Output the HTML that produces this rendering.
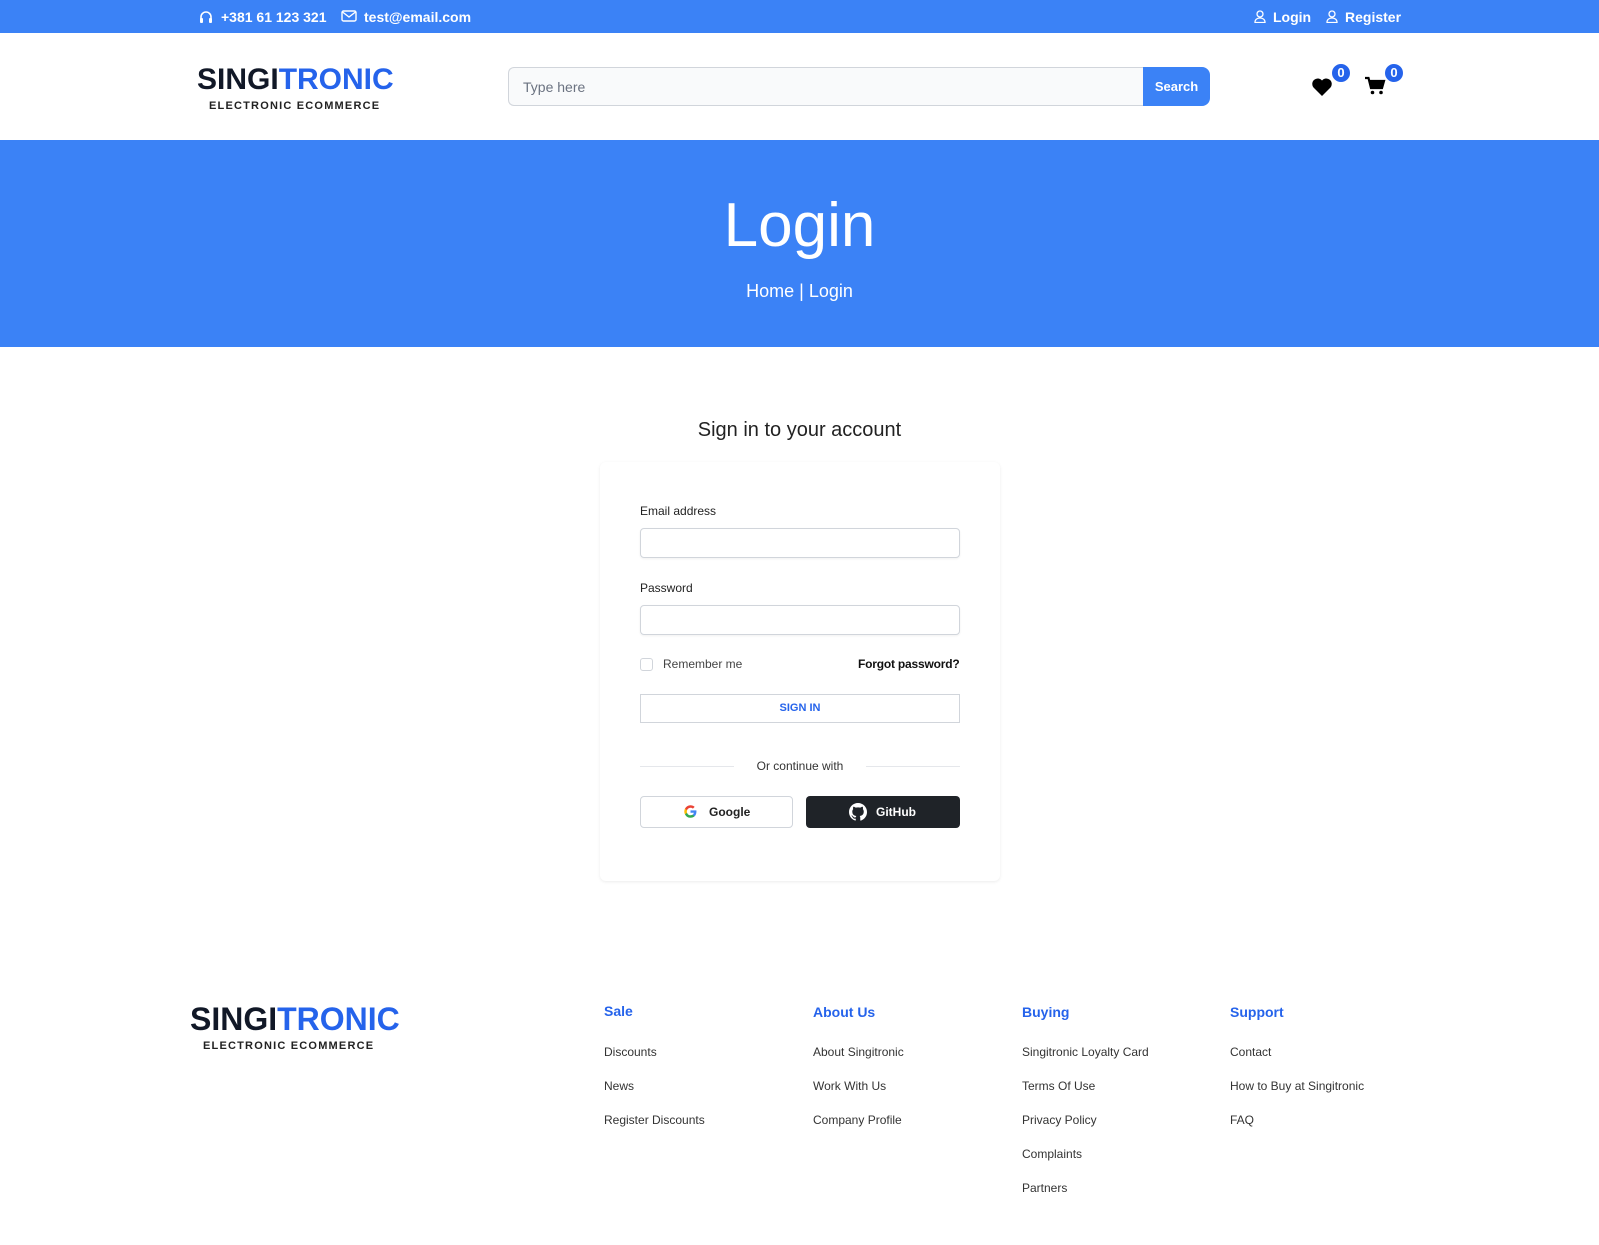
<!DOCTYPE html>
<html><head><meta charset="utf-8"><style>
*{box-sizing:border-box;margin:0;padding:0}
body{width:1599px;height:1245px;background:#fff;font-family:"Liberation Sans",Arial,sans-serif;color:#111827;position:relative;overflow:hidden}
.abs{position:absolute}
.top{left:0;top:0;width:1599px;height:33px;background:#3b82f6;color:#fff;font-weight:bold;font-size:14px}
.top span{position:absolute;top:9px}
.logo1{font-weight:900;font-size:30px;letter-spacing:0px;line-height:1}
.logo2{font-size:11px;letter-spacing:1.2px;font-weight:bold;color:#222}
.hero{left:0;top:140px;width:1599px;height:207px;background:#3b82f6;color:#fff;text-align:center}
input{font-family:inherit}
.field{position:absolute;left:640px;width:320px;height:30px;border:1px solid #d1d5db;border-radius:4px;box-shadow:0 1px 2px rgba(0,0,0,.06)}
.lbl{position:absolute;left:640px;font-size:12px;color:#222}
.fh{position:absolute;font-size:14px;font-weight:bold;color:#2563eb}
.fi{position:absolute;font-size:12px;color:#333}
</style></head><body>
<div class="abs top">
<svg class="abs" style="left:199px;top:10px" width="14" height="13" viewBox="0 0 14 13"><path d="M2 12V7a5 5 0 0 1 10 0v5" fill="none" stroke="#fff" stroke-width="1.6"/><rect x="1" y="8" width="3" height="5" rx="1" fill="#fff"/><rect x="10" y="8" width="3" height="5" rx="1" fill="#fff"/></svg>
<span style="left:221px">+381 61 123 321</span>
<svg class="abs" style="left:341px;top:10px" width="16" height="12" viewBox="0 0 16 12"><rect x="1" y="1" width="14" height="10" rx="1.5" fill="none" stroke="#fff" stroke-width="1.4"/><path d="M1.5 2l6.5 5 6.5-5" fill="none" stroke="#fff" stroke-width="1.4"/></svg>
<span style="left:364px">test@email.com</span>
<svg class="abs" style="left:1254px;top:10px" width="12" height="13" viewBox="0 0 12 13"><circle cx="6" cy="4" r="3" fill="none" stroke="#fff" stroke-width="1.3"/><path d="M1 12.5c0-3 2.2-4.5 5-4.5s5 1.5 5 4.5z" fill="none" stroke="#fff" stroke-width="1.3"/></svg>
<span style="left:1273px">Login</span>
<svg class="abs" style="left:1326px;top:10px" width="12" height="13" viewBox="0 0 12 13"><circle cx="6" cy="4" r="3" fill="none" stroke="#fff" stroke-width="1.3"/><path d="M1 12.5c0-3 2.2-4.5 5-4.5s5 1.5 5 4.5z" fill="none" stroke="#fff" stroke-width="1.3"/></svg>
<span style="left:1345px">Register</span>
</div>
<div class="abs" style="left:197px;top:65px"><div class="logo1">SINGI<span style="color:#2563eb">TRONIC</span></div><div class="logo2" style="margin:5px 0 0 12px">ELECTRONIC ECOMMERCE</div></div>
<div class="abs" style="left:508px;top:67px;width:636px;height:39px;border:1px solid #d1d5db;border-right:none;border-radius:6px 0 0 6px;background:#f9fafb;font-size:14px;color:#6b7280;padding:11px 14px">Type here</div>
<div class="abs" style="left:1143px;top:67px;width:67px;height:39px;background:#3b82f6;border-radius:0 8px 8px 0;color:#fff;font-size:13px;font-weight:bold;text-align:center;line-height:39px">Search</div>
<svg class="abs" style="left:1311px;top:77px" width="22" height="20" viewBox="0 0 22 20"><path d="M11 19L2.5 10.5A5 5 0 0 1 11 3.5a5 5 0 0 1 8.5 7z" fill="#000"/></svg>
<div class="abs" style="left:1331px;top:63px;width:20px;height:20px;border-radius:50%;background:#2563eb;color:#fff;font-size:13px;font-weight:bold;text-align:center;line-height:18px;border:1px solid #fff">0</div>
<svg class="abs" style="left:1364px;top:76px" width="22" height="20" viewBox="0 0 22 20"><path d="M1 2h3.5l2.5 10h11l2-7H6" fill="none" stroke="#000" stroke-width="2.2"/><path d="M6 6h14l-2 6H7z" fill="#000"/><circle cx="8.5" cy="16.5" r="1.8" fill="#000"/><circle cx="17" cy="16.5" r="1.8" fill="#000"/></svg>
<div class="abs" style="left:1384px;top:63px;width:20px;height:20px;border-radius:50%;background:#2563eb;color:#fff;font-size:13px;font-weight:bold;text-align:center;line-height:18px;border:1px solid #fff">0</div>
<div class="abs hero"><div style="font-size:62px;margin-top:55px;line-height:1">Login</div><div style="font-size:18px;margin-top:24px">Home | Login</div></div>
<div class="abs" style="left:0;width:1599px;top:419px;text-align:center;font-size:20px;color:#222">Sign in to your account</div>
<div class="abs" style="left:600px;top:462px;width:400px;height:419px;border-radius:6px;box-shadow:0 1px 3px rgba(0,0,0,.08)"></div>
<div class="lbl" style="top:504px">Email address</div>
<div class="field" style="top:528px"></div>
<div class="lbl" style="top:581px">Password</div>
<div class="field" style="top:605px"></div>
<div class="abs" style="left:640px;top:658px;width:13px;height:13px;border:1px solid #d1d5db;border-radius:3px"></div>
<div class="abs" style="left:663px;top:657px;font-size:12px;color:#444">Remember me</div>
<div class="abs" style="left:858px;top:657px;font-size:12px;font-weight:bold;color:#111;letter-spacing:-0.2px">Forgot password?</div>
<div class="abs" style="left:640px;top:694px;width:320px;height:29px;border:1px solid #d1d5db;text-align:center;line-height:27px;font-size:11px;font-weight:bold;color:#2563eb">SIGN IN</div>
<div class="abs" style="left:640px;top:766px;width:94px;border-top:1px solid #e5e7eb"></div>
<div class="abs" style="left:866px;top:766px;width:94px;border-top:1px solid #e5e7eb"></div>
<div class="abs" style="left:640px;top:759px;width:320px;text-align:center;font-size:12px;color:#333">Or continue with</div>
<div class="abs" style="left:640px;top:796px;width:153px;height:32px;border:1px solid #d1d5db;border-radius:4px;font-size:12px;font-weight:bold;color:#222;line-height:30px;padding-left:68px">Google</div>
<svg class="abs" style="left:684px;top:805px" width="13" height="13" viewBox="0 0 24 24"><path fill="#4285F4" d="M23 12.3c0-.8-.1-1.6-.2-2.3H12v4.4h6.2a5.3 5.3 0 0 1-2.3 3.5v2.9h3.7c2.2-2 3.4-5 3.4-8.5z"/><path fill="#34A853" d="M12 23.5c3.1 0 5.7-1 7.6-2.8l-3.7-2.9c-1 .7-2.3 1.1-3.9 1.1-3 0-5.5-2-6.4-4.7H1.8v3A11.5 11.5 0 0 0 12 23.5z"/><path fill="#FBBC05" d="M5.6 14.2a6.9 6.9 0 0 1 0-4.4v-3H1.8a11.5 11.5 0 0 0 0 10.4z"/><path fill="#EA4335" d="M12 5.1c1.7 0 3.2.6 4.4 1.7l3.3-3.3A11.5 11.5 0 0 0 1.8 6.8l3.8 3C6.5 7.1 9 5.1 12 5.1z"/></svg>
<div class="abs" style="left:806px;top:796px;width:154px;height:32px;background:#1f2328;border-radius:4px;font-size:12px;font-weight:bold;color:#fff;line-height:32px;padding-left:70px">GitHub</div>
<svg class="abs" style="left:849px;top:803px" width="18" height="18" viewBox="0 0 16 16"><path fill="#fff" d="M8 0C3.58 0 0 3.58 0 8c0 3.54 2.290 6.53 5.47 7.59.4.07.55-.17.55-.38v-1.33c-2.23.48-2.7-1.07-2.7-1.07-.36-.92-.89-1.170-.89-1.17-.73-.5.06-.49.06-.49.8.06 1.23.82 1.23.82.71 1.22 1.87.87 2.33.66.07-.52.28-.87.51-1.07-1.78-.2-3.64-.89-3.64-3.95 0-.87.31-1.59.82-2.15-.08-.2-.36-1.02.08-2.12 0 0 .67-.21 2.2.82a7.6 7.6 0 0 1 4 0c1.53-1.04 2.2-.82 2.2-.82.44 1.1.16 1.92.08 2.12.51.56.82 1.27.82 2.15 0 3.07-1.87 3.75-3.65 3.95.29.25.54.73.54 1.48v2.2c0 .21.15.46.55.38A8 8 0 0 0 16 8c0-4.42-3.58-8-8-8z"/></svg>
<div class="abs" style="left:190px;top:1003px"><div class="logo1" style="font-size:32px">SINGI<span style="color:#2563eb">TRONIC</span></div><div class="logo2" style="margin:5px 0 0 13px">ELECTRONIC ECOMMERCE</div></div>
<div class="fh" style="left:604px;top:1003px">Sale</div>
<div class="fi" style="left:604px;top:1045px">Discounts</div><div class="fi" style="left:604px;top:1079px">News</div><div class="fi" style="left:604px;top:1113px">Register Discounts</div>
<div class="fh" style="left:813px;top:1004px">About Us</div>
<div class="fi" style="left:813px;top:1045px">About Singitronic</div><div class="fi" style="left:813px;top:1079px">Work With Us</div><div class="fi" style="left:813px;top:1113px">Company Profile</div>
<div class="fh" style="left:1022px;top:1004px">Buying</div>
<div class="fi" style="left:1022px;top:1045px">Singitronic Loyalty Card</div><div class="fi" style="left:1022px;top:1079px">Terms Of Use</div><div class="fi" style="left:1022px;top:1113px">Privacy Policy</div><div class="fi" style="left:1022px;top:1147px">Complaints</div><div class="fi" style="left:1022px;top:1181px">Partners</div>
<div class="fh" style="left:1230px;top:1004px">Support</div>
<div class="fi" style="left:1230px;top:1045px">Contact</div><div class="fi" style="left:1230px;top:1079px">How to Buy at Singitronic</div><div class="fi" style="left:1230px;top:1113px">FAQ</div>
</body></html>
